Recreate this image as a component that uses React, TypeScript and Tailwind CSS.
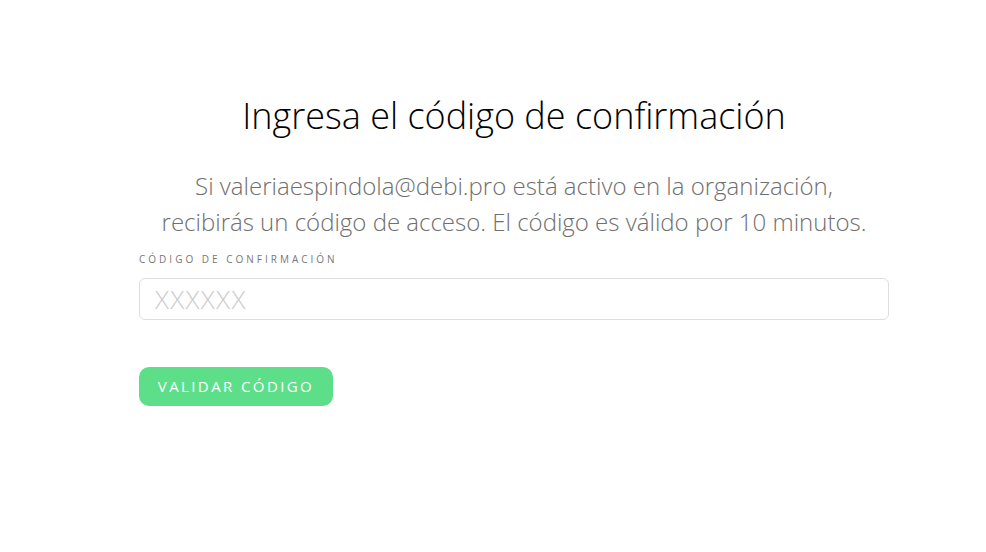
import React from 'react';

const App: React.FC = () => {
  return (
    <div className="min-h-[552px] w-full bg-white" style={{ fontFamily: '"Open Sans", "Liberation Sans", sans-serif' }}>
      <div className="ml-[139px] w-[750px] pt-[92px]">
        <h1 className="text-center text-[36px] leading-[48px] font-light text-black">
          Ingresa el código de confirmación
        </h1>
        <p className="mt-[28px] text-center text-[24px] leading-[36px] font-light text-[#6f6f6f]">
          Si valeriaespindola@debi.pro está activo en la organización,
          <br />
          recibirás un código de acceso. El código es válido por 10 minutos.
        </p>
        <label className="mt-[11px] block text-[10px] leading-[16px] tracking-[3px] uppercase text-[#777]">
          Código de confirmación
        </label>
        <input
          type="text"
          placeholder="XXXXXX"
          className="mt-[11px] h-[42px] w-full rounded-[6px] border border-[#dedede] px-[15px] text-[26px] tracking-[1.3px] font-light text-[#333] placeholder:text-[#cccccc] outline-none"
        />
        <button className="mt-[47px] h-[39px] w-[194px] rounded-[10px] bg-[#5ddf8a] text-[15px] tracking-[2.4px] text-white uppercase">
          Validar código
        </button>
      </div>
    </div>
  );
};

export default App;
